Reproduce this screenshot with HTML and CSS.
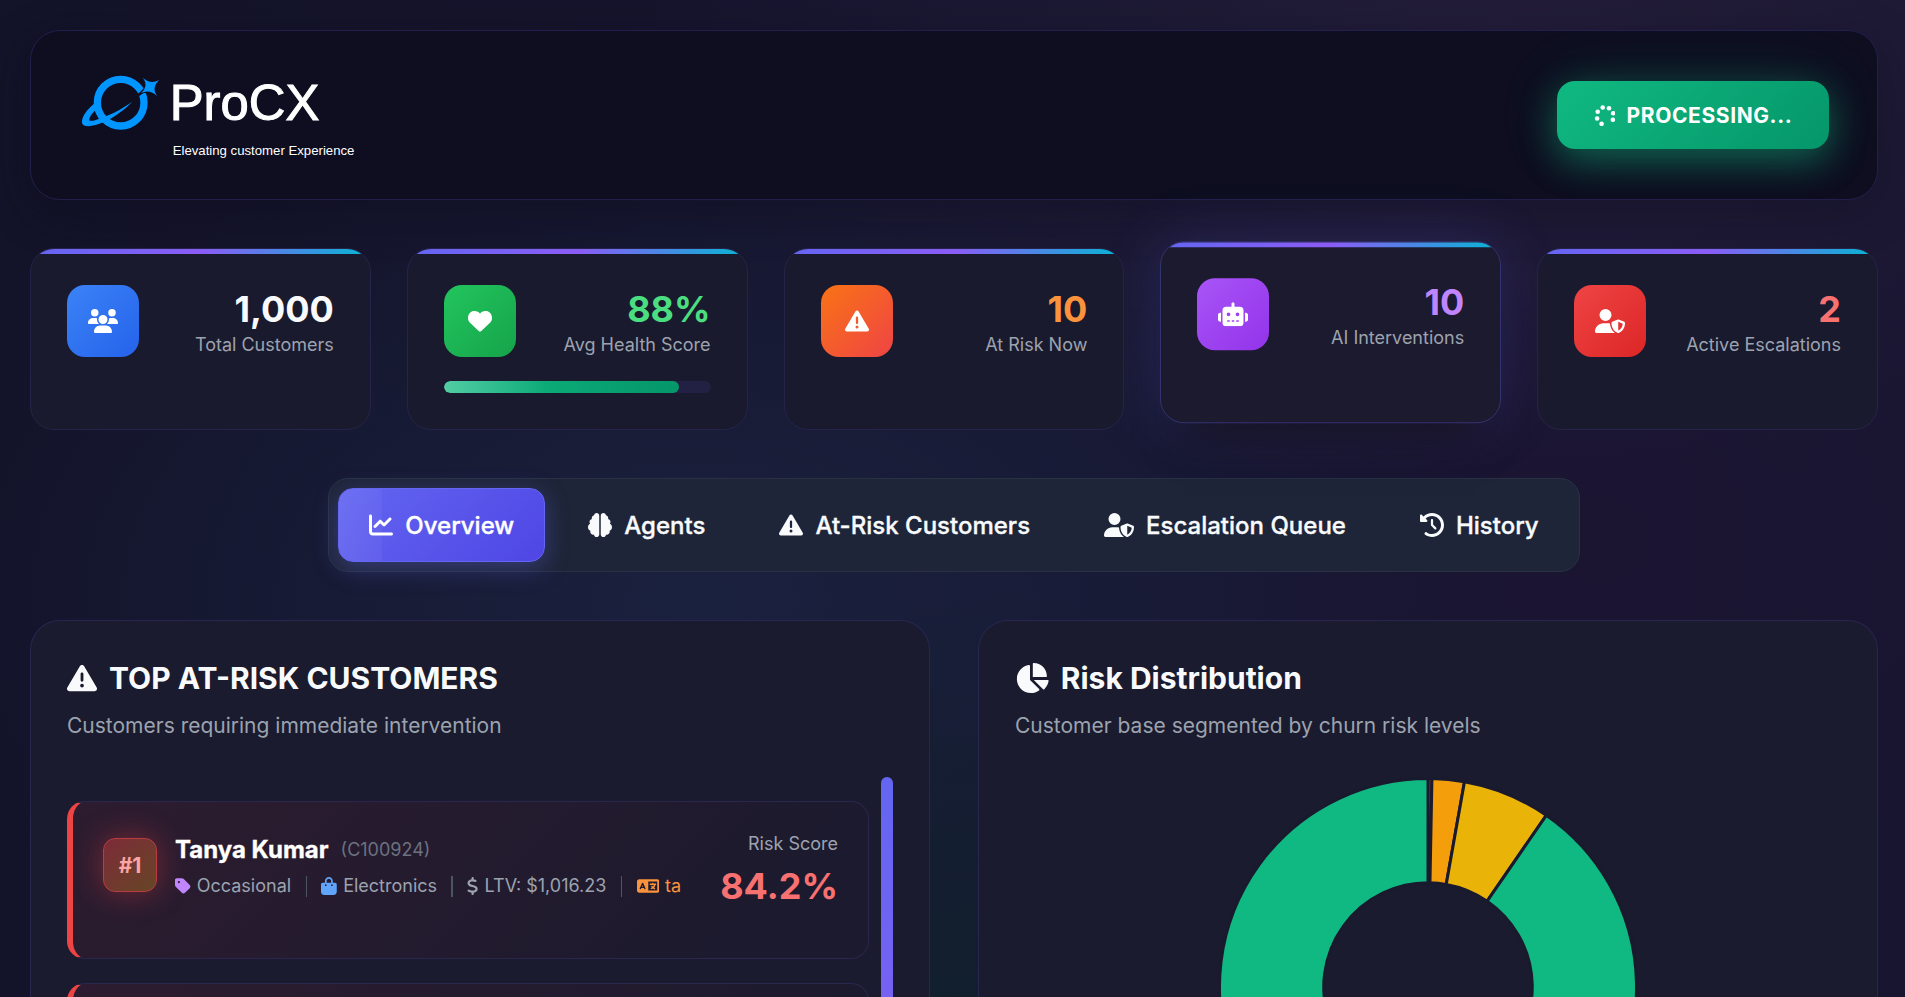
FILE: index.html
```
<!DOCTYPE html>
<html lang="en">
<head>
<meta charset="utf-8">
<title>ProCX</title>
<link rel="stylesheet" href="styles.css">
</head>
<body>
<svg class="sprite" aria-hidden="true">
  <symbol id="warn" viewBox="0 0 512 512"><path d="M256 32c14.2 0 27.3 7.5 34.5 19.8l216 368c7.3 12.4 7.3 27.7 .2 40.1S486.3 480 472 480L40 480c-14.3 0-27.6-7.7-34.7-20.1s-7-27.8 .2-40.1l216-368C228.7 39.5 241.8 32 256 32zm0 128c-13.3 0-24 10.7-24 24l0 112c0 13.3 10.7 24 24 24s24-10.7 24-24l0-112c0-13.3-10.7-24-24-24zm32 224a32 32 0 1 0 -64 0 32 32 0 1 0 64 0z"/></symbol>
  <symbol id="shield" viewBox="0 0 640 512"><path d="M224 256A128 128 0 1 0 224 0a128 128 0 1 0 0 256zm-45.7 48C79.8 304 0 383.8 0 482.3C0 498.7 13.3 512 29.7 512H418.3c1.8 0 3.5-.2 5.3-.5c-76.3-55.1-99.8-141-103.1-200.2c-16.1-4.8-33.1-7.3-50.7-7.3H178.3zm308.8-78.3l-120 48C358 277.4 352 286.2 352 296c0 63.3 25.9 168.8 134.8 214.2c5.9 2.5 12.6 2.5 18.5 0C614.1 464.8 640 359.3 640 296c0-9.8-6-18.6-15.1-22.3l-120-48c-5.7-2.3-12.1-2.3-17.8 0zM591.4 312c-3.9 50.7-27.2 116.7-95.4 149.7V273.8L591.4 312z"/></symbol>
</svg>

<header class="header">
  <svg class="logo" width="300" height="90" viewBox="177 150 900 270">
    <mask id="cut"><rect x="177" y="150" width="300" height="270" fill="#fff"/><path d="M338 237 354 226 371 213 394 222" fill="none" stroke="#000" stroke-width="8"/></mask>
    <g fill="#0095ff">
      <circle cx="302" cy="248" r="70" fill="none" stroke="#0095ff" stroke-width="22" mask="url(#cut)"/>
      <path d="M226 248C200 268 184 292 186 308C188 324 222 320 250 307C285 290 315 268 337 245C310 263 280 282 245 293C222 304 204 306 208 296C211 286 222 274 234 264Z"/>
      <path stroke="#0e0e20" stroke-width="7" paint-order="stroke" d="M369 173Q392 195 417 180Q393 204 411 228Q389 206 363 219Q387 199 369 173Z"/>
    </g>
    <text class="brand" x="449" y="301">ProCX</text>
    <text class="tagline" x="458" y="404">Elevating customer Experience</text>
  </svg>
  <button class="run">
    <svg width="21" height="21" viewBox="0 0 21 21"><g fill="#fff"><circle cx="8.7" cy="2.5" r="2.3"/><circle cx="15" cy="3.2" r="2.3"/><circle cx="19.2" cy="8.2" r="2.3"/><circle cx="18.8" cy="14.8" r="2.3"/><circle cx="7.6" cy="18.8" r="2.3"/><circle cx="3.1" cy="13.5" r="2.3"/><circle cx="3.7" cy="6.8" r="2.3"/></g></svg>
    <span>PROCESSING...</span>
  </button>
</header>

<section class="stats">
  <article class="stat">
    <div class="stat-row">
      <div class="tile blue"><svg width="30" height="24" viewBox="0 0 640 512"><path d="M144 0a80 80 0 1 1 0 160A80 80 0 1 1 144 0zM512 0a80 80 0 1 1 0 160A80 80 0 1 1 512 0zM0 298.7C0 239.8 47.8 192 106.7 192h42.7c15.9 0 31 3.5 44.6 9.7c-1.3 7.2-1.9 14.7-1.9 22.3c0 38.2 16.8 72.5 43.3 96c-.2 0-.4 0-.7 0H21.3C9.6 320 0 310.4 0 298.7zM405.3 320c-.2 0-.4 0-.7 0c26.6-23.5 43.3-57.8 43.3-96c0-7.6-.7-15-1.9-22.3c13.6-6.3 28.7-9.7 44.6-9.7h42.7C592.2 192 640 239.8 640 298.7c0 11.8-9.6 21.3-21.3 21.3H405.3zM224 224a96 96 0 1 1 192 0 96 96 0 1 1 -192 0zM128 485.3C128 411.7 187.7 352 261.3 352H378.7C452.3 352 512 411.7 512 485.3c0 14.7-11.9 26.7-26.7 26.7H154.7c-14.7 0-26.7-11.9-26.7-26.7z"/></svg></div>
      <div class="figures"><div class="value">1,000</div><div class="label">Total Customers</div></div>
    </div>
  </article>
  <article class="stat">
    <div class="stat-row">
      <div class="tile green"><svg width="24" height="24" viewBox="0 0 512 512"><path d="M47.6 300.4L228.3 469.1c7.5 7 17.4 10.9 27.7 10.9s20.2-3.9 27.7-10.9L464.4 300.4c30.4-28.3 47.6-68 47.6-109.5v-5.8c0-69.9-50.5-129.5-119.4-141C347 36.5 300.6 51.4 268 84L256 96 244 84c-32.6-32.6-79-47.5-124.6-39.9C50.5 55.6 0 115.2 0 185.1v5.8c0 41.5 17.2 81.2 47.6 109.5z"/></svg></div>
      <div class="figures"><div class="value v-green">88%</div><div class="label">Avg Health Score</div></div>
    </div>
    <div class="progress"><div class="progress-fill" style="width:88%"></div></div>
  </article>
  <article class="stat">
    <div class="stat-row">
      <div class="tile orange"><svg width="24" height="24"><use href="#warn"/></svg></div>
      <div class="figures"><div class="value v-orange">10</div><div class="label">At Risk Now</div></div>
    </div>
  </article>
  <article class="stat raised">
    <div class="stat-row">
      <div class="tile purple"><svg width="30" height="24" viewBox="0 0 640 512"><path d="M320 0c17.7 0 32 14.3 32 32V96H472c39.8 0 72 32.2 72 72V440c0 39.8-32.2 72-72 72H168c-39.8 0-72-32.2-72-72V168c0-39.8 32.2-72 72-72H288V32c0-17.7 14.3-32 32-32zM208 384c-8.8 0-16 7.2-16 16s7.2 16 16 16h32c8.8 0 16-7.2 16-16s-7.2-16-16-16H208zm96 0c-8.8 0-16 7.2-16 16s7.2 16 16 16h32c8.8 0 16-7.2 16-16s-7.2-16-16-16H304zm96 0c-8.8 0-16 7.2-16 16s7.2 16 16 16h32c8.8 0 16-7.2 16-16s-7.2-16-16-16H400zM264 256a40 40 0 1 0 -80 0 40 40 0 1 0 80 0zm152 40a40 40 0 1 0 0-80 40 40 0 1 0 0 80zM48 224H64V416H48c-26.5 0-48-21.5-48-48V272c0-26.5 21.5-48 48-48zm544 0c26.5 0 48 21.5 48 48v96c0 26.5-21.5 48-48 48H576V224h16z"/></svg></div>
      <div class="figures"><div class="value v-purple">10</div><div class="label">AI Interventions</div></div>
    </div>
  </article>
  <article class="stat">
    <div class="stat-row">
      <div class="tile red"><svg width="30" height="24"><use href="#shield"/></svg></div>
      <div class="figures"><div class="value v-red">2</div><div class="label">Active Escalations</div></div>
    </div>
  </article>
</section>

<nav class="tabs">
  <a class="tab active"><svg width="24" height="24" viewBox="0 0 512 512"><path d="M64 64c0-17.7-14.3-32-32-32S0 46.3 0 64V400c0 44.2 35.8 80 80 80H480c17.7 0 32-14.3 32-32s-14.3-32-32-32H80c-8.8 0-16-7.2-16-16V64zm406.6 86.6c12.5-12.5 12.5-32.8 0-45.3s-32.8-12.5-45.3 0L320 210.7l-57.4-57.4c-12.5-12.5-32.8-12.5-45.3 0l-112 112c-12.5 12.5-12.5 32.8 0 45.3s32.8 12.5 45.3 0L240 221.3l57.4 57.4c12.5 12.5 32.8 12.5 45.3 0l128-128z"/></svg><span>Overview</span></a>
  <a class="tab"><svg width="24" height="24" viewBox="0 0 512 512"><path d="M184 0c30.9 0 56 25.1 56 56V456c0 30.9-25.1 56-56 56c-28.9 0-52.7-21.9-55.7-50.1c-5.2 1.4-10.7 2.1-16.3 2.1c-35.3 0-64-28.7-64-64c0-7.4 1.3-14.6 3.6-21.2C21.4 367.4 0 338.2 0 304c0-31.9 18.7-59.5 45.8-72.3C37.1 220.8 32 207 32 192c0-30.7 21.6-56.3 50.4-62.6C80.8 123.9 80 118 80 112c0-29.9 20.6-55.1 48.3-62.1C131.3 21.9 155.1 0 184 0zM328 0c28.9 0 52.6 21.9 55.7 49.9c27.8 7 48.3 32.1 48.3 62.1c0 6-.8 11.9-2.4 17.4c28.8 6.2 50.4 31.9 50.4 62.6c0 15-5.1 28.8-13.8 39.7C493.3 244.5 512 272.1 512 304c0 34.2-21.4 63.4-51.6 74.8c2.3 6.6 3.6 13.8 3.6 21.2c0 35.3-28.7 64-64 64c-5.6 0-11.1-.7-16.3-2.1c-3 28.2-26.8 50.1-55.7 50.1c-30.9 0-56-25.1-56-56V56c0-30.9 25.1-56 56-56z"/></svg><span>Agents</span></a>
  <a class="tab"><svg width="24" height="24"><use href="#warn"/></svg><span>At-Risk Customers</span></a>
  <a class="tab"><svg width="30" height="24"><use href="#shield"/></svg><span>Escalation Queue</span></a>
  <a class="tab"><svg width="24" height="24" viewBox="0 0 512 512"><path d="M75 75L41 41C25.9 25.9 0 36.6 0 57.9V168c0 13.3 10.7 24 24 24H134.1c21.4 0 32.1-25.9 17-41l-30.8-30.8C155 85.5 203 64 256 64c106 0 192 86 192 192s-86 192-192 192c-40.8 0-78.6-12.7-109.7-34.4c-14.5-10.1-34.4-6.6-44.6 7.9s-6.6 34.4 7.9 44.6C151.2 495 201.7 512 256 512c141.4 0 256-114.6 256-256S397.4 0 256 0C185.3 0 121.3 28.7 75 75zm181 53c-13.3 0-24 10.7-24 24V256c0 6.4 2.5 12.5 7 17l72 72c9.4 9.4 24.6 9.4 33.9 0s9.4-24.6 0-33.9l-65-65V152c0-13.3-10.7-24-24-24z"/></svg><span>History</span></a>
</nav>

<main class="panels">
  <section class="panel">
    <h2 class="title"><svg width="30" height="30"><use href="#warn"/></svg><span>TOP AT-RISK CUSTOMERS</span></h2>
    <p class="subtitle">Customers requiring immediate intervention</p>
    <div class="scroller">
      <div class="list">
        <article class="customer">
          <div class="rank">#1</div>
          <div class="who">
            <div class="name-row"><span class="name">Tanya Kumar</span><span class="cid">(C100924)</span></div>
            <div class="facts">
              <span class="fact"><svg class="c-purple" width="15.75" height="18" viewBox="0 0 448 512"><path d="M0 80V229.5c0 17 6.7 33.3 18.7 45.3l176 176c25 25 65.5 25 90.5 0L418.7 317.3c25-25 25-65.5 0-90.5l-176-176c-12-12-28.3-18.7-45.3-18.7H48C21.5 32 0 53.5 0 80zm112 32a32 32 0 1 1 0 64 32 32 0 1 1 0-64z" fill-rule="evenodd"/></svg>Occasional</span>
              <i class="sep"></i>
              <span class="fact"><svg class="c-blue" width="15.75" height="18" viewBox="0 0 448 512"><path d="M160 112c0-35.3 28.7-64 64-64s64 28.7 64 64v48H160V112zm-48 48H48c-26.5 0-48 21.5-48 48V416c0 53 43 96 96 96H352c53 0 96-43 96-96V208c0-26.5-21.5-48-48-48H336V112C336 50.1 285.9 0 224 0S112 50.1 112 112v48zm24 48a24 24 0 1 1 0 48 24 24 0 1 1 0-48zm152 24a24 24 0 1 1 48 0 24 24 0 1 1 -48 0z" fill-rule="evenodd"/></svg>Electronics</span>
              <i class="sep"></i>
              <span class="fact"><svg width="11.25" height="18" viewBox="0 0 320 512"><path d="M160 0c17.7 0 32 14.3 32 32V67.7c1.6 .2 3.1 .4 4.7 .7c.4 .1 .7 .1 1.1 .2l48 8.8c17.4 3.2 28.9 19.9 25.7 37.2s-19.9 28.9-37.2 25.7l-47.5-8.7c-31.3-4.6-58.9-1.5-78.3 6.2s-27.2 18.3-29 28.1c-2 10.7-.5 16.7 1.2 20.4c1.8 3.9 5.5 8.3 12.8 13.2c16.3 10.7 41.3 17.7 73.7 26.3l2.9 .8c28.6 7.6 63.6 16.8 89.6 33.8c14.2 9.3 27.6 21.9 35.9 39.5c8.5 17.9 10.3 37.9 6.4 59.2c-6.9 38-33.1 63.4-65.6 76.7c-13.7 5.6-28.6 9.2-44.4 11V480c0 17.7-14.3 32-32 32s-32-14.3-32-32V445.1c-.4-.1-.9-.1-1.3-.2l-.2 0 0 0c-24.4-3.8-64.5-14.3-91.5-26.3c-16.1-7.2-23.4-26.1-16.2-42.2s26.1-23.4 42.2-16.2c20.9 9.3 55.3 18.5 75.2 21.6c31.9 4.7 58.2 2 76-5.3c16.9-6.9 24.6-16.9 26.8-28.9c1.9-10.6 .4-16.7-1.3-20.4c-1.9-4-5.6-8.4-13-13.3c-16.4-10.7-41.5-17.7-74-26.3l-2.8-.7 0 0C119.4 279.3 84.4 270 58.4 253c-14.2-9.3-27.5-22-35.8-39.6c-8.4-17.9-10.1-37.9-6.1-59.2C23.7 116 52.3 91.2 84.8 78.3c13.3-5.3 27.9-8.9 43.2-11V32c0-17.7 14.3-32 32-32z"/></svg>LTV: $1,016.23</span>
              <i class="sep"></i>
              <span class="fact c-orange"><svg width="22.5" height="18" viewBox="0 0 640 512"><path fill-rule="evenodd" d="M0 128C0 92.7 28.7 64 64 64H576c35.3 0 64 28.7 64 64V384c0 35.3-28.7 64-64 64H64c-35.3 0-64-28.7-64-64V128zm320 0V384H576V128H320zM178.3 175.9c-3.2-7.2-10.4-11.9-18.3-11.9s-15.1 4.7-18.3 11.9l-64 144c-4.5 10.1 .1 21.9 10.2 26.4s21.9-.1 26.4-10.2l8.9-20.1h73.6l8.9 20.1c4.5 10.1 16.3 14.6 26.4 10.2s14.6-16.3 10.2-26.4l-64-144zM160 233.2L179 276H141l19-42.8zM448 164c11 0 20 9 20 20v4h44 16c11 0 20 9 20 20s-9 20-20 20h-2l-1.6 4.5c-8.9 24.4-22.4 46.6-39.6 65.4c.9 .6 1.8 1.1 2.7 1.6l18.9 11.3c9.5 5.7 12.5 18 6.9 27.4s-18 12.5-27.4 6.9l-18.9-11.3c-4.5-2.7-8.8-5.5-13.1-8.5c-10.6 7.5-21.9 14-34 19.4l-3.6 1.6c-10.1 4.5-21.9-.1-26.4-10.2s.1-21.9 10.2-26.4l3.6-1.6c6.4-2.9 12.6-6.1 18.5-9.8l-12.2-12.2c-7.8-7.8-7.8-20.5 0-28.3s20.5-7.8 28.3 0l14.6 14.6 .5 .5c12.4-13.1 22.5-28.3 29.8-45H448 376c-11 0-20-9-20-20s9-20 20-20h52v-4c0-11 9-20 20-20z"/></svg>ta</span>
            </div>
          </div>
          <div class="score"><div class="label">Risk Score</div><div class="value v-red">84.2%</div></div>
        </article>
        <article class="customer"></article>
      </div>
      <div class="scrollbar"></div>
    </div>
  </section>

  <section class="panel">
    <h2 class="title"><svg width="33.75" height="30" viewBox="0 0 576 512"><path d="M304 240V16.6c0-9 7-16.6 16-16.6C443.7 0 544 100.3 544 224c0 9-7.6 16-16.6 16H304zM32 272C32 150.7 122.1 50.3 239 34.3c9.2-1.3 17 6.1 17 15.4V288L412.5 444.5c6.7 6.7 6.2 17.7-1.5 23.1C371.8 495.6 323.8 512 272 512C139.5 512 32 404.6 32 272zm526.4 16c9.3 0 16.6 7.8 15.4 17c-7.7 55.9-34.6 105.6-73.9 142.3c-6 5.6-15.4 5.2-21.2-.7L320 288H558.4z"/></svg><span>Risk Distribution</span></h2>
    <p class="subtitle">Customer base segmented by churn risk levels</p>
    <div class="chart">
      <svg width="420" height="420" viewBox="-210 -210 420 420">
        <g stroke="#1a1a2e" stroke-width="3" stroke-linejoin="bevel">
          <path fill="#ef4444" d="M0-208.5A208.5 208.5 0 0 1 3.93-208.46L1.97-104.23A104.25 104.25 0 0 0 0-104.25Z"/>
          <path fill="#f59e0b" d="M3.93-208.46A208.5 208.5 0 0 1 36.49-205.28L18.25-102.64A104.25 104.25 0 0 0 1.97-104.23Z"/>
          <path fill="#eab308" d="M36.49-205.28A208.5 208.5 0 0 1 118.28-171.7L59.14-85.85A104.25 104.25 0 0 0 18.25-102.64Z"/>
          <path fill="#10b981" d="M118.28-171.7A208.5 208.5 0 1 1 0-208.5L0-104.25A104.25 104.25 0 1 0 59.14-85.85Z"/>
        </g>
      </svg>
    </div>
  </section>
</main>
</body>
</html>
```
FILE: styles.css
```
* { box-sizing: border-box; margin: 0; }

html { height: 997px; overflow: hidden; background: #12122a; }

body {
  height: 997px;
  overflow: hidden;
  padding: 30px 27px 0 30px;
  display: flex;
  flex-direction: column;
  font-family: Inter, sans-serif;
  color: #f8fafc;
  background:
    radial-gradient(ellipse 420px 420px at 955px 1000px, rgba(16, 34, 44, .75), transparent),
    radial-gradient(ellipse 800px 480px at 700px 600px, rgba(30, 42, 74, .6), transparent),
    radial-gradient(ellipse 900px 480px at 1500px 20px, rgba(46, 36, 66, .5), transparent),
    radial-gradient(ellipse 500px 420px at 1600px 540px, rgba(34, 20, 54, .35), transparent),
    linear-gradient(90deg, #131329, #16152f 60%, #181530);
}

svg { display: block; fill: currentColor; flex: none; }
.sprite { position: absolute; width: 0; height: 0; }

.header {
  flex: none;
  height: 170px;
  padding: 0 48px;
  display: flex;
  align-items: center;
  justify-content: space-between;
  border: 1px solid #231f4c;
  border-radius: 30px;
  background: #0e0e20;
  box-shadow: 0 12px 48px rgba(10, 10, 24, .3);
  overflow: hidden;
}
.brand, .tagline { font-family: "Liberation Sans", sans-serif; fill: #fff; }
.brand { font-size: 152.5px; stroke: #fff; stroke-width: 3px; }
.tagline { font-size: 39.6px; }

.run {
  width: 272px;
  height: 68px;
  display: flex;
  align-items: center;
  justify-content: center;
  gap: 12px;
  border: 0;
  border-radius: 18px;
  color: #fff;
  font: 700 21px Inter, sans-serif;
  letter-spacing: .6px;
  background: linear-gradient(135deg, #10b981, #059669);
  box-shadow: 0 12px 36px rgba(16, 185, 129, .42), 0 0 60px rgba(16, 185, 129, .16);
}

.stats {
  flex: none;
  margin-top: 48px;
  display: grid;
  grid-template-columns: repeat(5, 1fr);
  gap: 36px;
}
.stat {
  position: relative;
  z-index: 1;
  height: 182px;
  padding: 36px;
  border: 1px solid #26234a;
  border-radius: 24px;
  background: #1a1a2e;
  overflow: hidden;
}
.stat::before {
  content: "";
  position: absolute;
  inset: 0 0 auto;
  height: 5px;
  background: linear-gradient(90deg, #6366f1, #8b5cf6 50%, #06b6d4);
}
.raised {
  z-index: 0;
  transform: translateY(-6.75px);
  border-color: #353270;
  background: #1c1a2e;
  box-shadow: 0 42px 36px -24px rgba(20, 17, 30, .75), 0 0 60px rgba(99, 102, 241, .2);
}
.stat-row { display: flex; justify-content: space-between; }
.tile {
  width: 72px;
  height: 72px;
  display: grid;
  place-items: center;
  border-radius: 18px;
  color: #fff;
}
.blue { background: linear-gradient(135deg, #3b82f6, #2563eb); }
.green { background: linear-gradient(135deg, #22c55e, #16a34a); }
.orange { background: linear-gradient(135deg, #f97316, #ef4444); }
.purple { background: linear-gradient(135deg, #a855f7, #9333ea); }
.red { background: linear-gradient(135deg, #ef4444, #dc2626); }

.figures { text-align: right; }
.value { font-size: 36px; line-height: 48px; font-weight: 700; }
.label { font-size: 18px; line-height: 24px; color: #9ca3af; }
.v-green { color: #4ade80; }
.v-orange { color: #fb923c; }
.v-purple { color: #c084fc; }
.v-red { color: #f87171; }

.progress {
  height: 12px;
  margin-top: 24px;
  border-radius: 6px;
  background: #222144;
  overflow: hidden;
}
.progress-fill {
  height: 12px;
  border-radius: 6px;
  background:
    linear-gradient(90deg, rgba(255, 255, 255, .28), transparent) 0 0 / 104px 100% no-repeat,
    linear-gradient(90deg, #10b981, #059669);
}

.tabs {
  flex: none;
  width: max-content;
  margin: 48px auto 0;
  padding: 9px;
  display: flex;
  gap: 12px;
  border: 1px solid #293245;
  border-radius: 20px;
  background: #1e2538;
}
.tab {
  height: 74px;
  padding: 0 30px;
  display: flex;
  align-items: center;
  gap: 12px;
  border: 1px solid transparent;
  border-radius: 15px;
  font-size: 24px;
  font-weight: 500;
  -webkit-text-stroke: .35px;
}
.active {
  border-color: #6366f1;
  color: #fff;
  background:
    linear-gradient(90deg, rgba(255, 255, 255, .07), rgba(255, 255, 255, .04)) 0 0 / 43px 100% no-repeat,
    linear-gradient(135deg, #6366f1, #4f46e5);
  box-shadow: 0 6px 24px rgba(99, 102, 241, .35);
}

.panels {
  flex: 1;
  min-height: 0;
  margin-top: 48px;
  display: grid;
  grid-template-columns: 1fr 1fr;
  grid-template-rows: 100%;
  gap: 48px;
}
.panel {
  padding: 36px 36px 0;
  border: 1px solid #28264f;
  border-bottom: 0;
  border-radius: 30px 30px 0 0;
  background: #1a1b2e;
  overflow: hidden;
}
.title {
  display: flex;
  align-items: center;
  gap: 12px;
  font-size: 30px;
  line-height: 42px;
  font-weight: 700;
}
.subtitle { margin-top: 12px; font-size: 21px; line-height: 30px; color: #9ca3af; }

.scroller { margin-top: 36px; height: 220px; display: flex; gap: 12px; overflow: hidden; }
.list { flex: 1; padding-top: 24px; display: grid; align-content: start; gap: 24px; }
.scrollbar { width: 12px; height: 480px; border-radius: 6px; background: linear-gradient(#6366f1, #8b5cf6); }

.customer {
  height: 158px;
  padding: 30px;
  display: flex;
  align-items: flex-start;
  border: 1px solid #2b264e;
  border-left: 6px solid #ef4444;
  border-radius: 18px;
  background: linear-gradient(135deg, #2d1c2f, #1c1a2e 85%);
}
.rank {
  width: 54px;
  height: 54px;
  margin: 6px 18px 0 0;
  display: grid;
  place-items: center;
  border: 1px solid #bb3c40;
  border-radius: 12px;
  color: #fca5a5;
  font-size: 21px;
  font-weight: 700;
  background: linear-gradient(135deg, #7d2b38, #664626);
  box-shadow: 0 0 30px rgba(239, 68, 68, .4);
}
.who { flex: 1; }
.name-row { display: flex; align-items: center; gap: 12px; line-height: 36px; }
.name { font-size: 24px; font-weight: 700; color: #fff; -webkit-text-stroke: .35px; }
.cid { font-size: 18px; color: #6b7280; }
.facts { margin-top: 6px; display: flex; align-items: center; line-height: 24px; font-size: 18px; color: #9ca3af; }
.fact { display: flex; align-items: center; gap: 6px; }
.sep { width: 1.5px; height: 21px; margin: 0 14.4px; background: #4b5563; }
.c-purple { color: #c084fc; }
.c-blue { color: #60a5fa; }
.c-orange { color: #fb923c; }
.score { text-align: right; }
.score .value { margin-top: 6px; }

.chart { margin-top: 36px; height: 220px; display: flex; align-items: flex-start; justify-content: center; overflow: hidden; }
```
